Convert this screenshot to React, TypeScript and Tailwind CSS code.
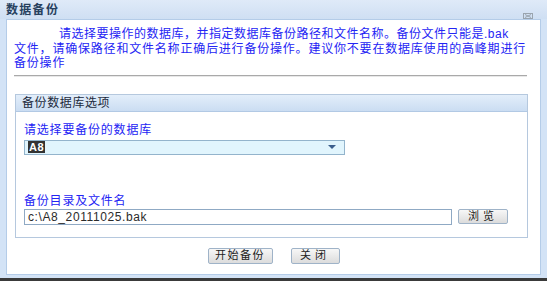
import React from "react";

const cjk = { fontFamily: '"Liberation Sans", "Noto Sans CJK SC", sans-serif' };

export default function App() {
  return (
    <div className="w-[547px] h-[281px] flex flex-col bg-[#d3e3f6] overflow-hidden" style={cjk}>
      {/* title bar */}
      <div className="h-[19px] flex items-center justify-between pl-[6px] pr-[14px] bg-gradient-to-b from-[#dfeaf8] to-[#cfdff3]">
        <span className="text-[12px] font-bold text-[#27415f] tracking-[1.3px] leading-none mt-[1px]">数据备份</span>
        <svg width="10" height="6" viewBox="0 0 10 6" className="mt-[12px]">
          <rect x="0.5" y="0.5" width="9" height="5" fill="none" stroke="#9aa4ae" />
          <path d="M2 1.5 L8 4.5 M8 1.5 L2 4.5" stroke="#9aa4ae" strokeWidth="1" />
        </svg>
      </div>
      {/* body */}
      <div className="flex-1 mx-[6px] bg-white border border-[#b4cce8] flex flex-col px-[7px] pt-[7px]">
        <div className="text-[12px] leading-[14.5px] text-[#2424f4] tracking-[0.8px]">
          <div className="whitespace-nowrap pl-[45px] tracking-[0.5px]">请选择要操作的数据库，并指定数据库备份路径和文件名称。备份文件只能是.bak</div>
          <div className="whitespace-nowrap">文件，请确保路径和文件名称正确后进行备份操作。建议你不要在数据库使用的高峰期进行</div>
          <div className="whitespace-nowrap">备份操作</div>
        </div>
        <div className="h-[2px] mt-[4px] mr-[6px] border-t border-[#a9a9a9] border-b border-b-[#e8e8e8]" />
        {/* fieldset */}
        <div className="mt-[17px] ml-[1px] mr-[5px] h-[144px] border border-[#b5c8de] flex flex-col">
          <div className="h-[17px] flex items-center pl-[6px] bg-gradient-to-b from-[#e3eefa] to-[#cbddf2] border-b border-[#b2c9e4]">
            <span className="text-[12px] text-[#1c2a3c] tracking-[0.6px] leading-none">备份数据库选项</span>
          </div>
          <div className="flex flex-col pl-[8px] pt-[11px]">
            <div className="text-[12px] leading-[14px] text-[#2424f4] tracking-[0.8px]">请选择要备份的数据库</div>
            <div className="mt-[3px] w-[321px] h-[15px] bg-[#e1f5fd] border border-[#93b4cc] flex items-center justify-between pl-[3px] pr-[8px]">
              <span className="bg-[#333] text-white text-[11px] font-bold leading-[12px] px-[1px] tracking-[0.5px]">A8</span>
              <svg width="8" height="4" viewBox="0 0 8 4"><path d="M0 0 H8 L4 4 Z" fill="#3b5e8c" /></svg>
            </div>
            <div className="mt-[39px] text-[12px] leading-[14px] text-[#2424f4] tracking-[0.8px]">备份目录及文件名</div>
            <div className="mt-[1px] flex items-center">
              <div className="w-[428px] h-[16px] border border-[#8fa9c4] flex items-center pl-[3px] text-[12px] text-[#2b2b2b] tracking-[0.6px]">
                c:\A8_20111025.bak
              </div>
              <button className="ml-[6px] w-[50px] h-[15px] border border-[#9fb3c8] rounded-[2px] bg-gradient-to-b from-[#f7f7f7] to-[#dcdcdc] text-[11px] leading-none text-[#222] tracking-[4px] flex items-center justify-center">
                浏览
              </button>
            </div>
          </div>
        </div>
        <div className="flex justify-center mt-[10px] gap-[18px]">
          <button className="w-[65px] h-[16px] border border-[#9fb3c8] rounded-[2px] bg-gradient-to-b from-[#f7f7f7] to-[#dcdcdc] text-[11px] leading-none text-[#222] tracking-[1.5px] flex items-center justify-center">
            开始备份
          </button>
          <button className="w-[49px] h-[16px] border border-[#9fb3c8] rounded-[2px] bg-gradient-to-b from-[#f7f7f7] to-[#dcdcdc] text-[11px] leading-none text-[#222] tracking-[4px] flex items-center justify-center">
            关闭
          </button>
        </div>
      </div>
      <div className="h-[3px]" />
      <div className="h-[3px] bg-[#3a3a3a]" />
    </div>
  );
}
